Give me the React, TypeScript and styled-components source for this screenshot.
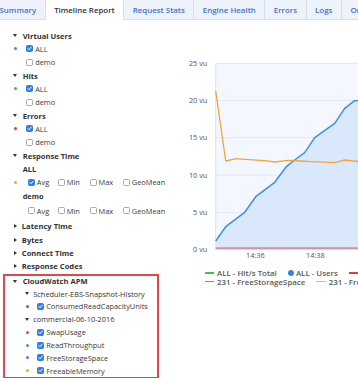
import React from 'react';
import styled, { createGlobalStyle } from 'styled-components';

const Global = createGlobalStyle`
  html, body { margin: 0; padding: 0; background: #fff; }
  body {
    width: 358px; height: 378px; overflow: hidden;
    font-family: "Open Sans", "Liberation Sans", Arial, sans-serif;
    color: #333;
  }
  * { box-sizing: border-box; }
`;

const Page = styled.div`
  width: 358px;
  height: 378px;
  overflow: hidden;
  display: flex;
  flex-direction: column;
`;

const TabBar = styled.div`
  display: flex;
  height: 20px;
  margin-left: -9px;
  flex-shrink: 0;
`;

const Tab = styled.div<{ $active?: boolean }>`
  flex-shrink: 0;
  display: flex;
  align-items: center;
  height: 20px;
  padding: 0 8.5px;
  font-size: 7.9px;
  font-weight: 600;
  white-space: nowrap;
  color: ${p => (p.$active ? '#333' : '#3f6fce')};
  background: ${p => (p.$active ? '#fff' : '#eef3fb')};
  border-right: 1px solid #d6deea;
  border-bottom: 1px solid ${p => (p.$active ? '#fff' : '#d6deea')};
`;

const Main = styled.div`
  flex: 1;
  display: flex;
  min-height: 0;
`;

const Sidebar = styled.div`
  width: 160px;
  flex-shrink: 0;
  padding-top: 9px;
`;

const Row = styled.div<{ $indent: number; $h?: number }>`
  display: flex;
  align-items: center;
  height: ${p => p.$h ?? 13.33}px;
  padding-left: ${p => p.$indent}px;
  white-space: nowrap;
`;

const CaretBox = styled.span<{ $w: number }>`
  width: ${p => p.$w}px;
  flex-shrink: 0;
  display: flex;
  align-items: center;
`;

const CaretDown = styled.span`
  width: 0;
  height: 0;
  border-left: 2.3px solid transparent;
  border-right: 2.3px solid transparent;
  border-top: 3px solid #333;
`;

const CaretRight = styled.span`
  width: 0;
  height: 0;
  margin-left: 1px;
  border-top: 2.3px solid transparent;
  border-bottom: 2.3px solid transparent;
  border-left: 3px solid #333;
`;

const HeaderText = styled.span<{ $weight?: number }>`
  font-size: ${p => (p.$weight === 400 ? 7.4 : 7.6)}px;
  font-weight: ${p => p.$weight ?? 700};
  color: #333;
`;

const SubHeaderText = styled.span`
  font-size: 7.4px;
  font-weight: 700;
  color: #333;
`;

const DotSlot = styled.span<{ $w: number }>`
  width: ${p => p.$w}px;
  flex-shrink: 0;
  display: flex;
  align-items: center;
`;

const Dot = styled.span<{ $color: string }>`
  width: 3px;
  height: 3px;
  border-radius: 50%;
  background: ${p => p.$color};
`;

const Box = styled.span<{ $checked: boolean }>`
  width: 7px;
  height: 7px;
  flex-shrink: 0;
  border-radius: 1.5px;
  display: flex;
  align-items: center;
  justify-content: center;
  background: ${p => (p.$checked ? '#2f7fe6' : '#fff')};
  border: 1px solid ${p => (p.$checked ? '#2f7fe6' : '#a9a9a9')};
`;

const ItemText = styled.span<{ $gap: number }>`
  margin-left: ${p => p.$gap}px;
  font-size: 7.4px;
  color: #3a3a3a;
`;

const Option = styled.span<{ $w: number }>`
  display: flex;
  align-items: center;
  width: ${p => p.$w}px;
  flex-shrink: 0;
`;

const Block = styled.div`
  padding-bottom: 2px;
`;

const Highlight = styled.div`
  margin: 0.5px 0 0 3px;
  width: 156px;
  border: 2px solid #e4474b;
`;

const ChartPanel = styled.div`
  flex: 1;
  min-width: 0;
  overflow: hidden;
  padding-top: 36px;
`;

const ChartSvg = styled.svg`
  display: block;
`;

const Legend = styled.div`
  padding-left: 44.7px;
`;

const LegendRow = styled.div`
  display: flex;
  align-items: center;
  height: 8.4px;
  white-space: nowrap;
`;

const LegendItem = styled.span`
  display: flex;
  align-items: center;
  margin-right: 11px;
  flex-shrink: 0;
`;

const Swatch = styled.span<{ $color: string }>`
  width: 9.3px;
  height: 1.6px;
  background: ${p => p.$color};
  margin-right: 3px;
`;

const SwatchDot = styled.span<{ $color: string }>`
  width: 6.6px;
  height: 6.6px;
  border-radius: 50%;
  background: ${p => p.$color};
  margin-right: 1.5px;
`;

const LegendText = styled.span`
  font-size: 7.9px;
  line-height: 8px;
  font-weight: 600;
  color: #5a5a5a;
`;

const Check = () => (
  <svg width="5" height="5" viewBox="0 0 5 5">
    <path d="M0.8 2.6 L2 3.8 L4.2 1.1" fill="none" stroke="#fff" strokeWidth="1" strokeLinecap="round" strokeLinejoin="round" />
  </svg>
);

const CheckBox = ({ checked }: { checked: boolean }) => (
  <Box $checked={checked}>{checked && <Check />}</Box>
);

const Header = ({ label, open, indent, caretW = 10.2 }: { label: string; open: boolean; indent: number; caretW?: number }) => (
  <Row $indent={indent}>
    <CaretBox $w={caretW}>{open ? <CaretDown /> : <CaretRight />}</CaretBox>
    <HeaderText>{label}</HeaderText>
  </Row>
);

const Item = ({ label, color, indent = 13.5, slot = 12.2, h }: { label: string; color?: string; indent?: number; slot?: number; h?: number }) => (
  <Row $indent={indent} $h={h}>
    <DotSlot $w={slot}>{color && <Dot $color={color} />}</DotSlot>
    <CheckBox checked={!!color} />
    <ItemText $gap={2.5}>{label}</ItemText>
  </Row>
);

const options = [
  { label: 'Avg', w: 30 },
  { label: 'Min', w: 31.7 },
  { label: 'Max', w: 33.3 },
  { label: 'GeoMean', w: 40 },
];

const OptionRow = ({ color }: { color?: string }) => (
  <Row $indent={13.5} $h={14.5}>
    <DotSlot $w={14.8}>{color && <Dot $color={color} />}</DotSlot>
    {options.map((o, i) => (
      <Option key={o.label} $w={o.w}>
        <CheckBox checked={!!color && i === 0} />
        <ItemText $gap={1.5}>{o.label}</ItemText>
      </Option>
    ))}
  </Row>
);

const blue: [number, number][] = [
  [55.7, 185], [65.7, 170.7], [84.7, 156.3], [95.7, 140.7], [114.7, 126.3], [126.3, 110.7],
  [134.7, 104], [144.7, 96.7], [154.7, 81.7], [174.7, 67.3], [184.7, 52.3], [194.7, 44.7], [200, 44.7],
];
const orange: [number, number][] = [
  [55.7, 35], [65.7, 105], [76.3, 102.7], [84.7, 103.3], [104.7, 104.7], [114.7, 106], [128, 104.3],
  [141.3, 105], [151.3, 105.7], [174.7, 106.7], [184.7, 104], [200, 105.7],
];
const pts = (a: [number, number][]) => a.map(([x, y]) => `${x},${y}`).join(' ');

const yTicks = [
  { label: '25 vu', y: 7.3 },
  { label: '20 vu', y: 44.7 },
  { label: '15 vu', y: 81.7 },
  { label: '10 vu', y: 119 },
  { label: '5 vu', y: 156.3 },
  { label: '0 vu', y: 193 },
];

const font = 'Open Sans, Liberation Sans, sans-serif';

const Chart = () => (
  <ChartSvg width={198} height={213} viewBox="0 0 198 213">
    <rect x={55.7} y={7.3} width={150} height={185.7} fill="#f4f8fe" />
    {yTicks.map(t => (
      <g key={t.label}>
        <line x1={55.7} x2={200} y1={t.y} y2={t.y} stroke="#e2e8f1" strokeWidth={1} />
        <text x={47.3} y={t.y + 2.6} textAnchor="end" fontSize={7.3} fill="#555" fontFamily={font}>{t.label}</text>
      </g>
    ))}
    <line x1={55.7} x2={55.7} y1={7.3} y2={193} stroke="#dbe3ee" strokeWidth={1} />
    <polygon points={`${pts(blue)} 200,193 55.7,193`} fill="#d9e8fb" />
    <polyline points={pts(blue)} fill="none" stroke="#3d8ef0" strokeWidth={1.5} strokeLinejoin="round" />
    <polyline points={pts(orange)} fill="none" stroke="#f5a33d" strokeWidth={1.3} strokeLinejoin="round" />
    <line x1={55.7} x2={200} y1={192.3} y2={192.3} stroke="#e4899d" strokeWidth={2} />
    <text x={95.3} y={202.3} textAnchor="middle" fontSize={7.3} fill="#555" fontFamily={font}>14:36</text>
    <text x={155.3} y={202.3} textAnchor="middle" fontSize={7.3} fill="#555" fontFamily={font}>14:38</text>
  </ChartSvg>
);

const tabs = ['Summary', 'Timeline Report', 'Request Stats', 'Engine Health', 'Errors', 'Logs', 'Original Test Configuration'];

export default function App() {
  return (
    <Page>
      <Global />
      <TabBar>
        {tabs.map(t => (
          <Tab key={t} $active={t === 'Timeline Report'}>{t}</Tab>
        ))}
      </TabBar>
      <Main>
        <Sidebar>
          <Header label="Virtual Users" open indent={12.5} />
          <Item label="ALL" color="#3b8cec" />
          <Item label="demo" />
          <Header label="Hits" open indent={12.5} />
          <Item label="ALL" color="#37c13b" />
          <Item label="demo" />
          <Header label="Errors" open indent={12.5} />
          <Item label="ALL" color="#e8324c" />
          <Item label="demo" />
          <Header label="Response Time" open indent={12.5} />
          <Block>
            <Row $indent={22.7} $h={12.5}><SubHeaderText>ALL</SubHeaderText></Row>
            <OptionRow color="#f5a33d" />
            <Row $indent={22.7} $h={14}><SubHeaderText>demo</SubHeaderText></Row>
            <OptionRow />
          </Block>
          <Header label="Latency Time" open={false} indent={12.5} caretW={9.3} />
          <Header label="Bytes" open={false} indent={12.5} caretW={9.3} />
          <Header label="Connect Time" open={false} indent={12.5} caretW={9.3} />
          <Header label="Response Codes" open={false} indent={12.5} caretW={9.3} />
          <Highlight>
            <Row $indent={7.5} $h={11.5}>
              <CaretBox $w={10.2}><CaretDown /></CaretBox>
              <HeaderText>CloudWatch APM</HeaderText>
            </Row>
            <Row $indent={19.7} $h={12.9}>
              <CaretBox $w={8.6}><CaretDown /></CaretBox>
              <HeaderText $weight={400}>Scheduler-EBS-Snapshot-History</HeaderText>
            </Row>
            <Item label="ConsumedReadCapacityUnits" color="#8c45d9" indent={21.2} slot={10.5} h={12.9} />
            <Row $indent={19.7} $h={12.9}>
              <CaretBox $w={8.6}><CaretDown /></CaretBox>
              <HeaderText $weight={400}>commercial-06-10-2016</HeaderText>
            </Row>
            <Item label="SwapUsage" color="#e23c9f" indent={21.2} slot={10.5} h={12.9} />
            <Item label="ReadThroughput" color="#4a90e6" indent={21.2} slot={10.5} h={12.9} />
            <Item label="FreeStorageSpace" color="#9a54e0" indent={21.2} slot={10.5} h={12.9} />
            <Item label="FreeableMemory" color="#f5a33d" indent={21.2} slot={10.5} h={12.9} />
          </Highlight>
        </Sidebar>
        <ChartPanel>
          <Chart />
          <Legend>
            <LegendRow>
              <LegendItem><Swatch $color="#3cc63c" /><LegendText>ALL - Hit/s Total</LegendText></LegendItem>
              <LegendItem><SwatchDot $color="#2f86f0" /><LegendText>ALL - Users</LegendText></LegendItem>
              <LegendItem><Swatch $color="#e8324c" /><LegendText>ALL - Errors</LegendText></LegendItem>
            </LegendRow>
            <LegendRow>
              <LegendItem><Swatch $color="#a66de6" /><LegendText>231 - FreeStorageSpace</LegendText></LegendItem>
              <LegendItem><Swatch $color="#f5b060" /><LegendText>231 - FreeableMemory</LegendText></LegendItem>
            </LegendRow>
          </Legend>
        </ChartPanel>
      </Main>
    </Page>
  );
}
